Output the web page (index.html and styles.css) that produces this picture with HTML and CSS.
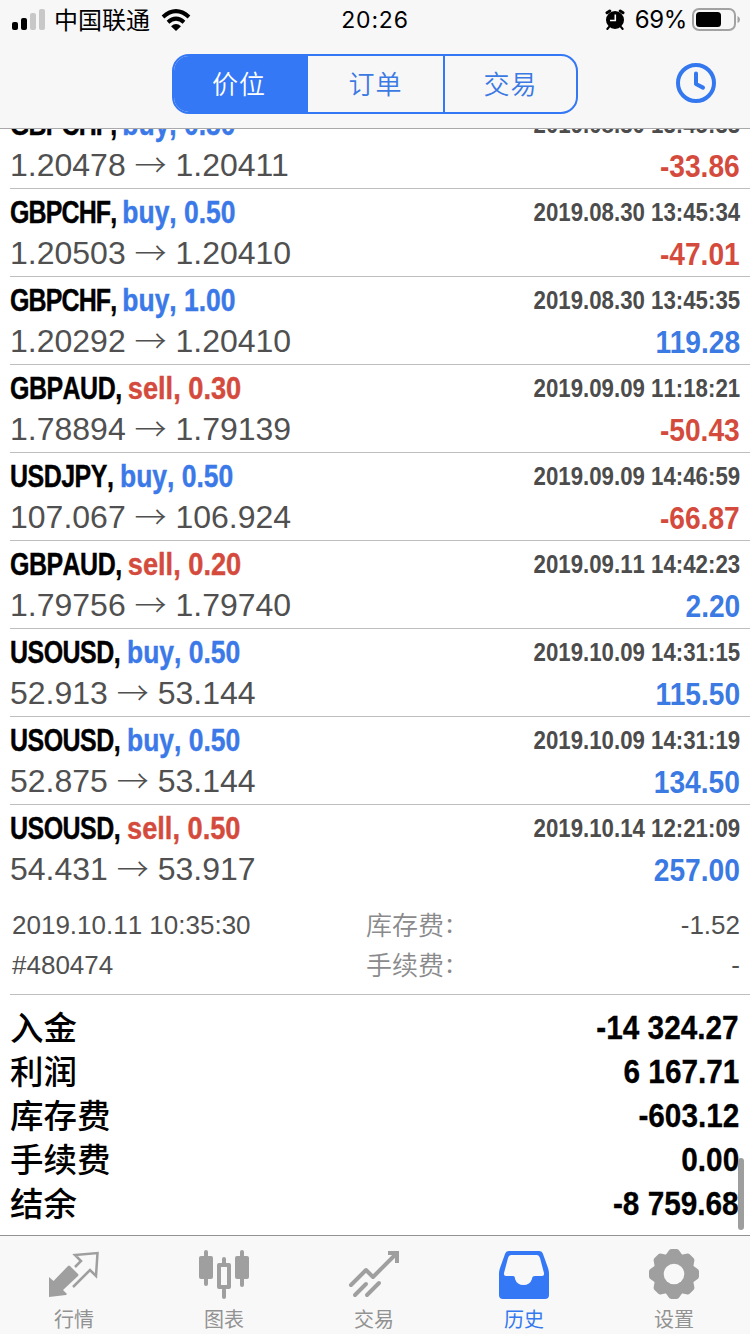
FILE: index.html
```html
<!DOCTYPE html>
<html lang="zh-CN">
<head>
<meta charset="utf-8">
<title>历史</title>
<link rel="stylesheet" href="styles.css">
</head>
<body>
<div class="app">
  <header class="header">
    <div class="status">
      <div class="status-left">
        <svg class="signal" width="34" height="22" viewBox="0 0 34 22"><rect x="0" y="13" width="6" height="8" rx="2"/><rect x="9" y="9" width="6" height="12" rx="2"/><g fill="#c8c8c9"><rect x="18" y="4" width="6" height="17" rx="2"/><rect x="27" y="0" width="6" height="21" rx="2"/></g></svg>
        <span class="carrier">中国联通</span>
        <svg class="wifi" width="30" height="22" viewBox="0 0 30 22"><g fill="none" stroke="#000" stroke-width="4"><path d="M2 7.9Q15-3.6 28 7.9"/><path d="M7 13.2Q15 6.2 23 13.2"/></g><path d="M10 17.2Q15 13 20 17.2L15 22Z"/></svg>
      </div>
      <div class="clock">20:26</div>
      <div class="status-right">
        <svg width="20" height="22" viewBox="0 0 20 22"><circle cx="10" cy="11" r="9"/><g stroke="#000" stroke-width="3" stroke-linecap="round"><path d="M2 3.8L4.800 2M18 3.800L15.200 2"/><path stroke-width="2" d="M4 18L2.300 20M16 18L17.700 20"/></g><path d="M10.300 5.500V11.500H5" fill="none" stroke="#fff" stroke-width="1.600"/></svg>
        <span class="percent">69%</span>
        <svg width="48" height="24" viewBox="0 0 48 24"><rect x="1" y="1" width="42" height="21" rx="6" fill="none" stroke="#a2a2a3" stroke-width="2"/><rect x="4" y="4" width="25" height="15" rx="3.5"/><path d="M45.5 8Q48 9 48 11.5T45.5 15Z" fill="#a2a2a3"/></svg>
      </div>
    </div>
    <div class="nav">
      <div class="segments"><div class="segment on">价位</div><div class="segment">订单</div><div class="segment">交易</div></div>
      <svg class="history-icon" width="40" height="40" viewBox="0 0 40 40" fill="none" stroke="#3478f0"><circle cx="20" cy="20" r="18" stroke-width="4"/><path d="M20 10.5V21L27 24.6" stroke-width="4" stroke-linejoin="round" stroke-linecap="round"/></svg>
    </div>
  </header>
  <main class="content">
    <div class="deals">
      <div class="deal"><div class="top"><div class="title"><span class="sym chf">GBPCHF, </span><span class="buy">buy, 0.50</span></div><div class="date">2019.08.30 13:45:33</div></div><div class="bottom"><div class="price">1.20478 <i>→</i> 1.20411</div><div class="value loss">-33.86</div></div></div>
      <div class="deal"><div class="top"><div class="title"><span class="sym chf">GBPCHF, </span><span class="buy">buy, 0.50</span></div><div class="date">2019.08.30 13:45:34</div></div><div class="bottom"><div class="price">1.20503 <i>→</i> 1.20410</div><div class="value loss">-47.01</div></div></div>
      <div class="deal"><div class="top"><div class="title"><span class="sym chf">GBPCHF, </span><span class="buy">buy, 1.00</span></div><div class="date">2019.08.30 13:45:35</div></div><div class="bottom"><div class="price">1.20292 <i>→</i> 1.20410</div><div class="value">119.28</div></div></div>
      <div class="deal"><div class="top"><div class="title"><span class="sym">GBPAUD, </span><span class="sell">sell, 0.30</span></div><div class="date">2019.09.09 11:18:21</div></div><div class="bottom"><div class="price">1.78894 <i>→</i> 1.79139</div><div class="value loss">-50.43</div></div></div>
      <div class="deal"><div class="top"><div class="title"><span class="sym">USDJPY, </span><span class="buy">buy, 0.50</span></div><div class="date">2019.09.09 14:46:59</div></div><div class="bottom"><div class="price">107.067 <i>→</i> 106.924</div><div class="value loss">-66.87</div></div></div>
      <div class="deal"><div class="top"><div class="title"><span class="sym">GBPAUD, </span><span class="sell">sell, 0.20</span></div><div class="date">2019.09.11 14:42:23</div></div><div class="bottom"><div class="price">1.79756 <i>→</i> 1.79740</div><div class="value">2.20</div></div></div>
      <div class="deal"><div class="top"><div class="title"><span class="sym">USOUSD, </span><span class="buy">buy, 0.50</span></div><div class="date">2019.10.09 14:31:15</div></div><div class="bottom"><div class="price">52.913 <i>→</i> 53.144</div><div class="value">115.50</div></div></div>
      <div class="deal"><div class="top"><div class="title"><span class="sym">USOUSD, </span><span class="buy">buy, 0.50</span></div><div class="date">2019.10.09 14:31:19</div></div><div class="bottom"><div class="price">52.875 <i>→</i> 53.144</div><div class="value">134.50</div></div></div>
      <div class="deal last"><div class="top"><div class="title"><span class="sym">USOUSD, </span><span class="sell">sell, 0.50</span></div><div class="date">2019.10.14 12:21:09</div></div><div class="bottom"><div class="price">54.431 <i>→</i> 53.917</div><div class="value">257.00</div></div></div>
    </div>
    <div class="details">
      <div class="detail"><span>2019.10.11 10:35:30</span><span class="label">库存费<b>:</b></span><span class="amount">-1.52</span></div>
      <div class="detail"><span>#480474</span><span class="label">手续费<b>:</b></span><span class="amount">-</span></div>
    </div>
    <div class="summary">
      <div class="sum"><span>入金</span><span class="total">-14 324.27</span></div>
      <div class="sum"><span>利润</span><span class="total">6 167.71</span></div>
      <div class="sum"><span>库存费</span><span class="total">-603.12</span></div>
      <div class="sum"><span>手续费</span><span class="total">0.00</span></div>
      <div class="sum"><span>结余</span><span class="total">-8 759.68</span></div>
    </div>
    <div class="scrollbar"></div>
  </main>
  <nav class="tabs">
    <div class="tab"><svg width="52" height="52" viewBox="0 0 52 52"><path fill="#9f9f9f" d="M1 29L5.500 33L20 18Q21 17 22 18L30 26Q31 27 30 28L15 42L19 46L18 47L1 49Z"/><path fill="none" stroke="#9f9f9f" stroke-width="2.500" d="M27 19L33 13L27 7L49.500 5L48 28L42 22L25 39"/></svg><span>行情</span></div>
    <div class="tab"><svg width="52" height="52" viewBox="0 0 52 52" fill="#9f9f9f"><rect x="1" y="8" width="14" height="23" rx="2"/><rect x="6" y="2" width="4" height="36" rx="2"/><rect x="37" y="8" width="14" height="23" rx="2"/><rect x="42" y="2" width="4" height="37" rx="2"/><rect x="21" y="17" width="10" height="22" fill="none" stroke="#9f9f9f" stroke-width="4" stroke-linejoin="round"/><rect x="24" y="9" width="4" height="8" rx="2"/><rect x="24" y="40" width="4" height="11" rx="2"/></svg><span>图表</span></div>
    <div class="tab"><svg width="52" height="52" viewBox="0 0 52 52" fill="none" stroke="#9f9f9f" stroke-width="4" stroke-linecap="round"><path d="M3 37L18 22L25 29L47 7" stroke-linejoin="round"/><path d="M40 5H49V15" stroke-linecap="butt"/><path d="M7 47L18 36M19 47L31 35"/></svg><span>交易</span></div>
    <div class="tab active"><svg width="52" height="52" viewBox="0 0 52 52"><path fill="#3478f6" fill-rule="evenodd" d="M11 3H41Q44 3 45 6L50 20Q51 23 51 26V47Q51 51 47 51H5Q1 51 1 47V26Q1 23 2 20L7 6Q8 3 11 3ZM13 7Q11 7 10 10L6 25Q5.500 28 8 28H15Q17 28 17 31A9 9 0 0 0 34 31Q34 28 37 28H44Q46.500 28 46 25L42 10Q41 7 39 7Z"/></svg><span>历史</span></div>
    <div class="tab"><svg width="52" height="52" viewBox="-26 -26 52 52"><g fill="#9f9f9f"><circle r="20.500"/><path id="t" d="M-9-18L-5.500-23Q-4.500-25-2.500-25H2.500Q4.500-25 5.500-23L9-18V18L5.500 23Q4.500 25 2.500 25H-2.500Q-4.500 25-5.500 23L-9 18Z"/><use href="#t" transform="rotate(45)"/><use href="#t" transform="rotate(90)"/><use href="#t" transform="rotate(135)"/></g><circle r="10.300" fill="#f8f8f8"/></svg><span>设置</span></div>
  </nav>
</div>
</body>
</html>
```
FILE: styles.css
```css
* { box-sizing: border-box; }
body { margin: 0; background: #fff; font-family: "Liberation Sans", "Noto Sans CJK SC", sans-serif; }
svg { display: block; flex: none; }
.app { width: 750px; height: 1334px; display: flex; flex-direction: column; overflow: hidden; }

.header { height: 129px; flex: none; background: #f7f7f8; border-bottom: 1px solid #a9a9ab; }
.status { height: 40px; display: grid; grid-template-columns: 1fr auto 1fr; align-items: center; font: 24px/40px Inter, "Noto Sans CJK SC", sans-serif; }
.status-left { display: flex; align-items: center; padding-left: 12px; }
.carrier { margin: 0 11px 0 8px; padding-bottom: 3px; line-height: 37px; font-family: "Noto Sans CJK SC", sans-serif; }
.clock { font-size: 23px; letter-spacing: .8px; }
.status-right { display: flex; align-items: center; justify-content: flex-end; padding-right: 10px; }
.percent { margin: 0 5px 0 10px; letter-spacing: -.4px; }
.nav { display: flex; justify-content: space-between; align-items: center; padding: 14px 34px 0 172px; }
.segments { display: grid; grid-template-columns: 134px 135px 1fr; width: 406px; height: 60px; border: 2px solid #3478f6; border-radius: 17px; background: linear-gradient(90deg, #3478f6 134px, transparent 134px) no-repeat padding-box; }
.segment { text-align: center; color: #3b79e3; letter-spacing: 1px; font: 350 26px/54px "Noto Sans CJK SC", sans-serif; }
.segment:last-child { border-left: 2px solid #3478f6; }
.segment.on { color: #fff; padding-right: 4px; }
.history-icon { margin-top: -3px; }

.content { position: relative; flex: 1; min-height: 0; overflow: hidden; background: #fff; }
.deals { margin-top: -28px; }
.deal { height: 88px; margin-left: 10px; padding: 4px 10px 0 0; border-bottom: 1px solid #bebebf; }
.deal.last { border-bottom-color: transparent; }
.top, .bottom { display: flex; justify-content: space-between; white-space: pre; }
.top { height: 40px; }
.title { font-weight: bold; font-size: 32px; line-height: 39px; transform: scaleX(.78); transform-origin: left; font-kerning: none; -webkit-text-stroke: .4px currentColor; }
.sym { color: #000; letter-spacing: -.64px; }
.sym.chf { letter-spacing: -1.1px; }
.buy, .sell { display: inline-block; transform: scaleX(1.09); transform-origin: left; }
.buy { color: #3b79e8; transform: scaleX(1.06); }
.sell { color: #d44b3d; }
.date { font-weight: bold; font-size: 25px; line-height: 39px; color: #4c4c4c; transform: scaleX(.89); transform-origin: right; font-kerning: none; }
.price { font-size: 32px; line-height: 41px; color: #505050; }
.price i { display: inline-block; font: 300 32px/1 "Noto Sans CJK SC", sans-serif; transform: translateY(1px); }
.value { font-weight: bold; font-size: 32px; line-height: 42px; color: #3b79e3; transform: scaleX(.88); transform-origin: right; }
.value.loss { color: #d44b3d; }

.details { height: 102px; margin-left: 10px; padding: 12px 10px 0 2px; border-bottom: 1px solid #bebebf; color: #505050; font-size: 26px; font-kerning: none; }
.detail { display: grid; grid-template-columns: 354px 1fr auto; line-height: 40px; height: 40px; }
.label { font-family: "Noto Sans CJK SC", sans-serif; font-weight: 350; line-height: 37px; color: #8a8a8c; }
.label b { display: inline-block; font-weight: 400; margin-left: 2px; transform: translateY(-2px); }
.summary { padding: 9px 11px 0 10px; }
.sum { display: flex; justify-content: space-between; height: 44px; font: 500 33.5px/43px "Noto Sans CJK SC", sans-serif; }
.total { font: bold 34px/47px "Liberation Sans", sans-serif; transform: scaleX(.875); transform-origin: right; -webkit-text-stroke: .3px #000; }
.scrollbar { position: absolute; right: 6px; bottom: 5px; width: 6px; height: 72px; border-radius: 3px; background: #9e9e9e; }

.tabs { height: 99px; flex: none; display: flex; border-top: 1px solid #929294; background: #f8f8f8; }
.tab { width: 150px; flex: none; display: flex; flex-direction: column; align-items: center; padding: 12px 2px 0 0; color: #929292; font: 400 20px/28px "Noto Sans CJK SC", sans-serif; }
.tab span { margin-top: 5px; }
.tab.active { color: #3478f0; }
```
